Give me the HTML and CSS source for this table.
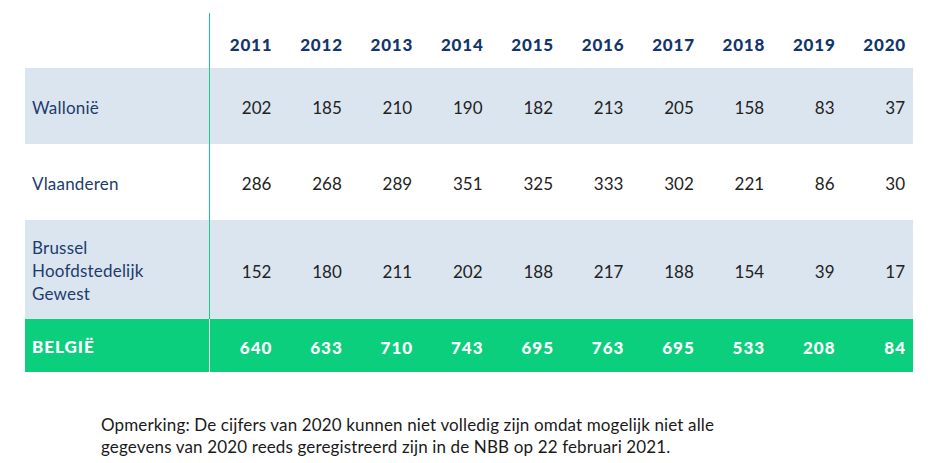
FILE: index.html
```html
<!DOCTYPE html>
<html lang="nl">
<head>
<meta charset="utf-8">
<title>Tabel</title>
<link rel="stylesheet" href="styles.css">
</head>
<body>
<div class="table">
  <div class="row head">
    <div class="label"></div>
    <div class="cell first">2011</div><div class="cell">2012</div><div class="cell">2013</div><div class="cell">2014</div><div class="cell">2015</div><div class="cell">2016</div><div class="cell">2017</div><div class="cell">2018</div><div class="cell">2019</div><div class="cell">2020</div>
  </div>
  <div class="row shaded r1">
    <div class="label">Wallonië</div>
    <div class="cell first">202</div><div class="cell">185</div><div class="cell">210</div><div class="cell">190</div><div class="cell">182</div><div class="cell">213</div><div class="cell">205</div><div class="cell">158</div><div class="cell">83</div><div class="cell">37</div>
  </div>
  <div class="row r2">
    <div class="label">Vlaanderen</div>
    <div class="cell first">286</div><div class="cell">268</div><div class="cell">289</div><div class="cell">351</div><div class="cell">325</div><div class="cell">333</div><div class="cell">302</div><div class="cell">221</div><div class="cell">86</div><div class="cell">30</div>
  </div>
  <div class="row shaded r3">
    <div class="label">Brussel<br>Hoofdstedelijk<br>Gewest</div>
    <div class="cell first">152</div><div class="cell">180</div><div class="cell">211</div><div class="cell">202</div><div class="cell">188</div><div class="cell">217</div><div class="cell">188</div><div class="cell">154</div><div class="cell">39</div><div class="cell">17</div>
  </div>
  <div class="row total">
    <div class="label">BELGIË</div>
    <div class="cell first">640</div><div class="cell">633</div><div class="cell">710</div><div class="cell">743</div><div class="cell">695</div><div class="cell">763</div><div class="cell">695</div><div class="cell">533</div><div class="cell">208</div><div class="cell">84</div>
  </div>
</div>
<p class="note">Opmerking: De cijfers van 2020 kunnen niet volledig zijn omdat mogelijk niet alle<br>gegevens van 2020 reeds geregistreerd zijn in de NBB op 22 februari 2021.</p>
</body>
</html>
```

FILE: styles.css
```css
html, body {
  margin: 0;
  padding: 0;
  background: #ffffff;
}
body {
  font-family: "Lato", "Liberation Sans", sans-serif;
}
.table {
  margin: 13px 0 0 25px;
  width: 888px;
}
.row {
  display: grid;
  grid-template-columns: 184px repeat(10, 1fr);
  align-items: center;
}
.row > div {
  box-sizing: border-box;
  height: 100%;
  display: flex;
  align-items: center;
}
.label {
  padding-left: 7px;
  color: #1d3c6d;
  font-size: 17px;
  line-height: 23px;
  letter-spacing: 0.2px;
  padding-top: 2px;
}
.cell {
  justify-content: flex-end;
  padding-right: 8px;
  color: #222222;
  font-size: 17px;
  padding-top: 3px;
}
.first {
  border-left: 1px solid #1dc98a;
}
.head {
  height: 55px;
}
.head .cell {
  color: #12366b;
  font-weight: 900;
  font-size: 17px;
  letter-spacing: 0.8px;
  padding-right: 7px;
  padding-top: 7px;
}
.shaded {
  background: #dbe5ef;
}
.r1 { height: 76px; }
.r2 { height: 76px; }
.r3 { height: 99px; }
.total {
  height: 53px;
  background: #0ccf7e;
}
.total .label,
.total .cell {
  color: #ffffff;
  font-weight: 900;
  font-size: 17px;
  letter-spacing: 1px;
}
.total .cell {
  padding-right: 7px;
}
.total .first {
  border-left-color: #ffffff;
}
.note {
  margin: 42px 0 0 101px;
  font-size: 17px;
  line-height: 22px;
  letter-spacing: 0.14px;
  color: #1a1a1a;
}
```
